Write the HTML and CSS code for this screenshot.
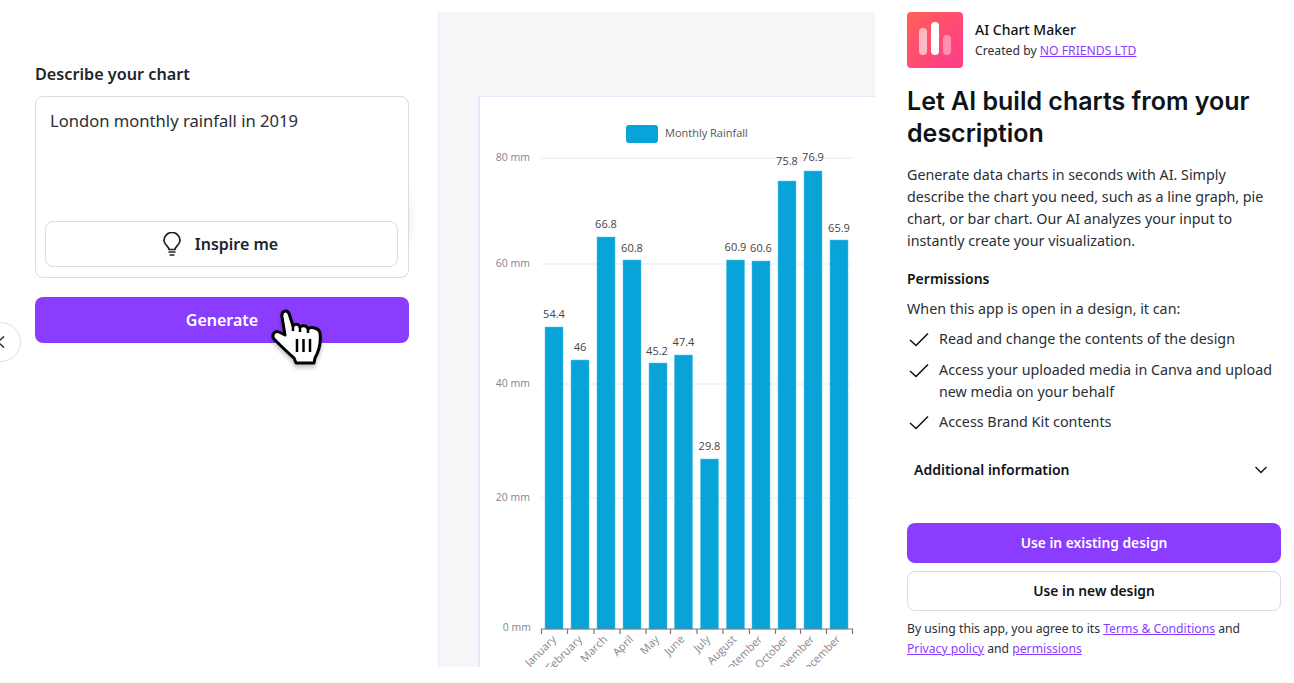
FILE: index.html
```html
<!DOCTYPE html>
<html lang="en">

<head>
  <meta charset="UTF-8" />
  <meta name="viewport" content="width=device-width, initial-scale=1.0" />
  <title>AI Chart Maker</title>
  <link rel="stylesheet" href="styles.css">
</head>

<body>
  <div class="page">
    <section class="form-panel">
      <button class="back-btn" type="button" aria-label="Back">
        <svg width="10" height="12" viewBox="0 0 10 12"><path d="M7 .5 1 6l6 5.500" fill="none" stroke="#1b1f26" stroke-width="1.400" /></svg>
      </button>
      <label class="field-label" for="prompt">Describe your chart</label>
      <div class="prompt-box">
        <div class="prompt-text" id="prompt">London monthly rainfall in 2019</div>
        <button class="inspire-btn" type="button">
          <svg width="20" height="24" viewBox="0 0 20 24">
            <path d="M7 17.500C7 14.500 2 13 2 8.500a8 8 0 0 1 16 0c0 4.500-5 6-5 9Z" fill="none" stroke="#1b1f26" stroke-width="1.700" stroke-linejoin="round" />
            <path d="M6.500 20h7M7.500 23h5" stroke="#1b1f26" stroke-width="1.700" />
          </svg>
          Inspire me
        </button>
      </div>
      <div class="generate-wrap">
        <button class="generate-btn" type="button">Generate</button>
        <svg class="hand" width="80" height="80" viewBox="0 0 80 80">
          <path class="hand-fill" d="M25 40 22 22C21 15 28 14 29.500 20L33 31C35 28 39 29 40 32 42 30 47 30 48 34 51 31 59 33 60 38 61 46 59 56 55 63L54 68H36L34 63C28 58 20 50 14 44 11 40 15 35 19 37Z" />
          <path class="hand-lines" d="M37 44V57M43.500 44V57M50 44V57M33 31V36M40 32V37M48 34V38" />
        </svg>
      </div>
    </section>

    <section class="preview-panel">
      <div class="chart-card">
        <svg class="chart" width="395" height="570" viewBox="480 97 395 570">
          <rect class="legend-key" x="626" y="125" width="32" height="18" rx="3" />
          <text class="legend-label" x="665" y="137">Monthly Rainfall</text>

          <g class="grid">
            <line x1="541" y1="158" x2="852" y2="158" />
            <line x1="541" y1="264" x2="852" y2="264" />
            <line x1="541" y1="384" x2="852" y2="384" />
            <line x1="541" y1="498" x2="852" y2="498" />
          </g>
          <g class="y-labels">
            <text x="530" y="161">80 mm</text>
            <text x="530" y="267">60 mm</text>
            <text x="530" y="387">40 mm</text>
            <text x="530" y="501">20 mm</text>
            <text x="531" y="631">0 mm</text>
          </g>

          <g class="bars">
            <rect x="545" y="327" width="18" height="302" />
            <rect x="571" y="360" width="18" height="269" />
            <rect x="597" y="237" width="18" height="392" />
            <rect x="623" y="260" width="18" height="369" />
            <rect x="649" y="363" width="18" height="266" />
            <rect x="674.500" y="355" width="18" height="274" />
            <rect x="700.500" y="459" width="18" height="170" />
            <rect x="726.500" y="260" width="18" height="369" />
            <rect x="752" y="261" width="18" height="368" />
            <rect x="778" y="181" width="18" height="448" />
            <rect x="804" y="171" width="18" height="458" />
            <rect x="830" y="240" width="18" height="389" />
          </g>
          <g class="values">
            <text x="554" y="318">54.4</text>
            <text x="580" y="351">46</text>
            <text x="606" y="228">66.8</text>
            <text x="632" y="252">60.8</text>
            <text x="657" y="355">45.2</text>
            <text x="683.500" y="346">47.4</text>
            <text x="709.500" y="450">29.8</text>
            <text x="735.500" y="251">60.9</text>
            <text x="761" y="252">60.6</text>
            <text x="787" y="165">75.8</text>
            <text x="813" y="161">76.9</text>
            <text x="839" y="232">65.9</text>
          </g>

          <path class="axis" d="M541.500 634V629H852.500V634M567.500 629V634M594 629V634M620 629V634M646 629V634M670.500 629V634M697 629V634M723 629V634M749.500 629V634M775.500 629V634M800.500 629V634M826.500 629V634" />
          <g class="months">
            <text transform="translate(557 640) rotate(-45)">January</text>
            <text transform="translate(583 640) rotate(-45)">February</text>
            <text transform="translate(608 640) rotate(-45)">March</text>
            <text transform="translate(634 640) rotate(-45)">April</text>
            <text transform="translate(660 640) rotate(-45)">May</text>
            <text transform="translate(685 640) rotate(-45)">June</text>
            <text transform="translate(711 640) rotate(-45)">July</text>
            <text transform="translate(737 640) rotate(-45)">August</text>
            <text transform="translate(763 640) rotate(-45)">September</text>
            <text transform="translate(789 640) rotate(-45)">October</text>
            <text transform="translate(815 640) rotate(-45)">November</text>
            <text transform="translate(841 640) rotate(-45)">December</text>
          </g>
        </svg>
      </div>
    </section>

    <aside class="info-panel">
      <header class="app-head">
        <div class="app-logo">
          <svg width="56" height="56" viewBox="0 0 56 56">
            <rect x="12" y="16" width="8" height="27" rx="4" fill="#fff" opacity="0.6" />
            <rect x="24" y="10" width="8" height="33" rx="4" fill="#fff" />
            <rect x="36" y="23" width="8" height="20" rx="4" fill="#fff" opacity="0.4" />
          </svg>
        </div>
        <div>
          <div class="app-name">AI Chart Maker</div>
          <div class="app-by">Created by <a href="#">NO FRIENDS LTD</a></div>
        </div>
      </header>

      <h1>Let AI build charts from your description</h1>
      <p class="intro">Generate data charts in seconds with AI. Simply describe the chart you need, such as a line graph, pie chart, or bar chart. Our AI analyzes your input to instantly create your visualization.</p>

      <h2>Permissions</h2>
      <p class="perm-lead">When this app is open in a design, it can:</p>
      <ul class="perm-list">
        <li>
          <svg width="24" height="16" viewBox="0 0 24 16"><path d="M3 8 9 13.500 21 1.500" fill="none" stroke="#0e1318" stroke-width="1.600" /></svg>
          <span>Read and change the contents of the design</span>
        </li>
        <li>
          <svg width="24" height="16" viewBox="0 0 24 16"><path d="M3 8 9 13.500 21 1.500" fill="none" stroke="#0e1318" stroke-width="1.600" /></svg>
          <span>Access your uploaded media in Canva and upload new media on your behalf</span>
        </li>
        <li>
          <svg width="24" height="16" viewBox="0 0 24 16"><path d="M3 8 9 13.500 21 1.500" fill="none" stroke="#0e1318" stroke-width="1.600" /></svg>
          <span>Access Brand Kit contents</span>
        </li>
      </ul>

      <div class="more-row">
        <span>Additional information</span>
        <svg width="14" height="8" viewBox="0 0 14 8"><path d="M1.500 1 7 6.500 12.500 1" fill="none" stroke="#0e1318" stroke-width="1.400" /></svg>
      </div>

      <button class="btn btn-primary" type="button">Use in existing design</button>
      <button class="btn btn-outline" type="button">Use in new design</button>
      <p class="legal">By using this app, you agree to its <a href="#">Terms &amp; Conditions</a> and <a href="#">Privacy policy</a> and <a href="#">permissions</a></p>
    </aside>
  </div>
</body>

</html>
```

FILE: styles.css
```css
* {
  box-sizing: border-box;
}

html,
body {
  margin: 0;
  height: 683px;
  overflow: hidden;
  background-color: white;
}

body {
  color: #0e1318;
  font-family: "Noto Sans", Arial, sans-serif;
}

button {
  font-family: inherit;
  cursor: pointer;
}

a {
  color: #8b3dff;
}

.page {
  display: flex;
  height: 683px;
}

/* left column */
.form-panel {
  position: relative;
  width: 438px;
  flex: none;
  padding: 64px 29px 0 35px;
}

.back-btn {
  position: absolute;
  left: -19px;
  top: 322px;
  width: 40px;
  height: 40px;
  padding: 0 0 0 2px;
  border: 1px solid #dcdfe6;
  border-radius: 50%;
  background-color: white;
  display: flex;
  align-items: center;
  justify-content: center;
}

.field-label {
  display: block;
  font-size: 16.200px;
  font-weight: 600;
  line-height: 20px;
  color: #20242b;
  margin-bottom: 12px;
}

.prompt-box {
  position: relative;
  height: 182px;
  padding: 10px 10px 10px 9px;
  border: 1px solid #dadce3;
  border-radius: 8px;
  display: flex;
  flex-direction: column;
  justify-content: space-between;
}

/* faint smudge right of the box */
.prompt-box::after {
  content: "";
  position: absolute;
  right: -9px;
  top: 88px;
  width: 8px;
  height: 66px;
  background: radial-gradient(ellipse at left, #f1f2f5, rgba(255, 255, 255, 0) 75%);
}

.prompt-text {
  padding: 3px 0 0 5px;
  font-size: 16.600px;
  line-height: 21px;
  color: #2a2e35;
}

.inspire-btn {
  height: 46px;
  padding: 0 9px 0 6px;
  border: 1px solid #d8dae0;
  border-radius: 8px;
  background-color: white;
  color: #20242b;
  font-size: 16px;
  font-weight: 600;
  display: flex;
  align-items: center;
  justify-content: center;
  gap: 13px;
}

.generate-wrap {
  position: relative;
  margin-top: 19px;
}

.generate-btn {
  width: 100%;
  height: 46px;
  border: none;
  border-radius: 8px;
  background-color: #8b3dff;
  color: white;
  font-size: 16px;
  font-weight: 600;
}

.hand {
  position: absolute;
  left: 225px;
  top: -2px;
  filter: drop-shadow(0 3px 2px rgba(0, 0, 0, 0.25));
}

.hand-fill {
  fill: white;
  stroke: black;
  stroke-width: 3;
  stroke-linejoin: round;
}

.hand-lines {
  fill: none;
  stroke: black;
  stroke-width: 2.500;
}

/* chart preview */
.preview-panel {
  width: 437px;
  height: 655px;
  flex: none;
  margin-top: 12px;
  padding: 84px 0 0 39px;
  border-left: 1px solid #ece8fb;
  background-color: #f5f6f8;
  overflow: hidden;
}

.chart-card {
  width: 400px;
  height: 571px;
  border-top: 1px solid #ebe7fa;
  border-left: 2px solid #ebe7fa;
  background-color: white;
  overflow: hidden;
}

.chart {
  display: block;
}

.chart text {
  font-family: "Open Sans", Arial, sans-serif;
  font-size: 11px;
}

.legend-key,
.bars rect {
  fill: #08a3d9;
}

.bars rect {
  stroke: #5ac1e6;
  stroke-width: 0.500;
}

.chart .legend-label {
  fill: #555;
  font-size: 11px;
}

.grid line {
  stroke: #e4e8f7;
  stroke-width: 1;
}

.chart .y-labels text {
  fill: #85858c;
  font-size: 10.500px;
  text-anchor: end;
}

.values text {
  fill: #444;
  text-anchor: middle;
}

.axis {
  fill: none;
  stroke: #74777d;
  stroke-width: 1.200;
}

.months text {
  fill: #85858c;
  text-anchor: end;
}

/* right column */
.info-panel {
  width: 374px;
  flex: none;
  margin-left: 32px;
  padding-top: 12px;
}

.app-head {
  display: flex;
  align-items: center;
  gap: 12px;
}

.app-logo {
  width: 56px;
  height: 56px;
  border-radius: 4px;
  background: linear-gradient(135deg, #ff6058, #ff3a8c);
}

.app-logo svg {
  display: block;
}

.app-name {
  font-size: 14px;
  font-weight: 500;
  line-height: 20px;
}

.app-by {
  margin-top: 1px;
  font-size: 12.200px;
  line-height: 20px;
  color: #2a2e35;
}

h1 {
  margin: 17px 0 0;
  font-family: Inter, Arial, sans-serif;
  font-size: 25px;
  font-weight: 600;
  line-height: 32px;
  color: #0e1318;
}

.intro {
  margin: 15px 0 0;
  font-size: 14.300px;
  line-height: 22px;
  color: #2a2e35;
}

h2 {
  margin: 16px 0 0;
  font-size: 14px;
  font-weight: 600;
  line-height: 22px;
}

.perm-lead {
  margin: 8px 0 0;
  font-size: 14.300px;
  line-height: 22px;
  color: #2a2e35;
}

.perm-list {
  list-style: none;
  margin: 8px 0 0;
  padding: 0;
}

.perm-list li {
  display: flex;
  gap: 8px;
  margin-bottom: 8.500px;
  font-size: 14.300px;
  line-height: 22px;
  color: #2a2e35;
}

.perm-list svg {
  flex: none;
  margin-top: 4px;
}

.more-row {
  display: flex;
  align-items: center;
  justify-content: space-between;
  margin-top: 25.500px;
  padding: 0 13px 0 7px;
  font-size: 14px;
  font-weight: 600;
  line-height: 22px;
}

.btn {
  display: block;
  width: 100%;
  height: 40px;
  border-radius: 8px;
  font-size: 13.800px;
  font-weight: 600;
}

.btn-primary {
  margin-top: 42px;
  border: none;
  background-color: #8b3dff;
  color: white;
}

.btn-outline {
  margin-top: 8px;
  border: 1px solid #d8dae0;
  background-color: white;
  color: #0e1318;
}

.legal {
  margin: 8px 0 0;
  font-size: 12.200px;
  line-height: 20px;
  color: #2a2e35;
}
```
